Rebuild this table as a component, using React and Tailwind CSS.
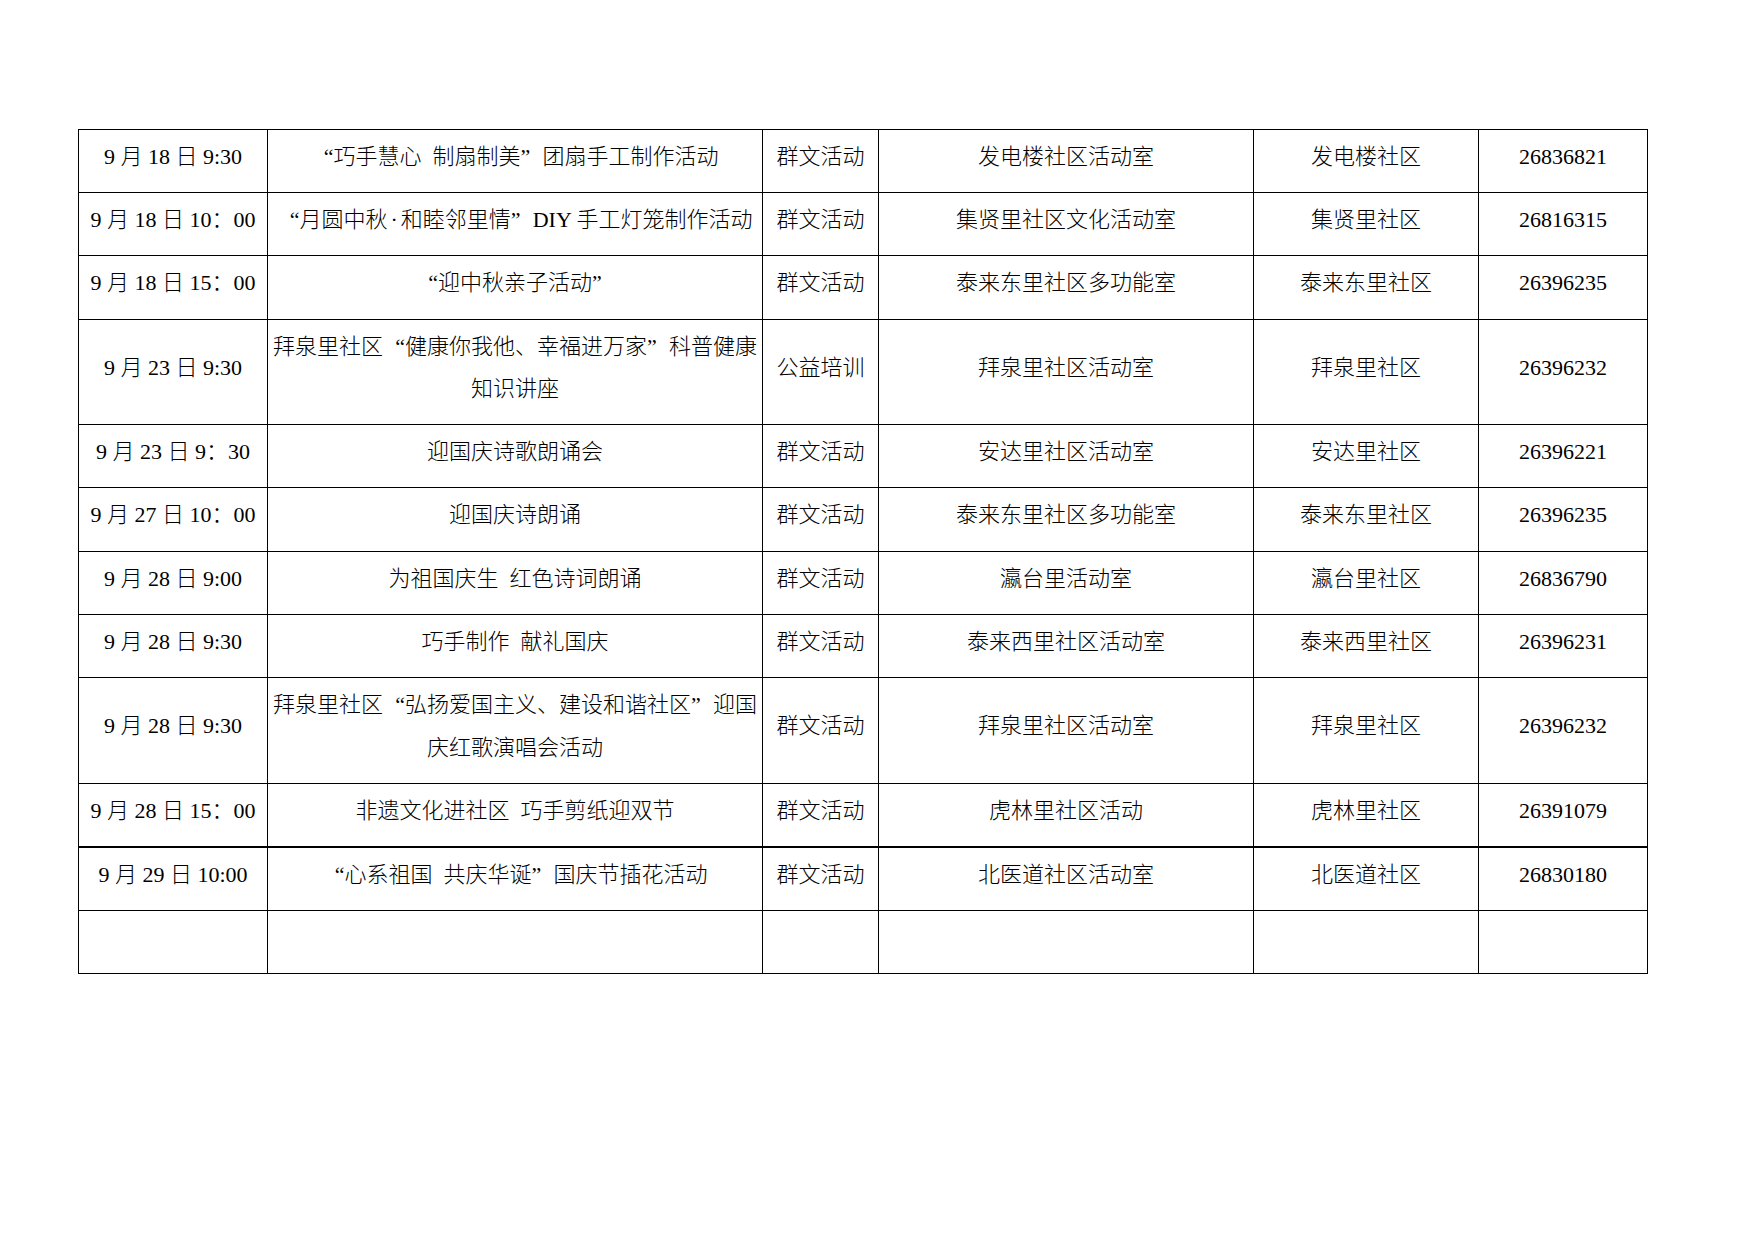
import React from "react";

const L = () => <span className="inline-block w-[1em] text-right">“</span>;
const R = () => <span className="inline-block w-[1em] text-left">”</span>;
const Dot = () => <span className="inline-block w-[0.6em] text-center">·</span>;
const G = () => <span className="inline-block w-[0.5em]"> </span>;

const rows = [
  ["9 月 18 日 9:30", <><L />巧手慧心<G />制扇制美<R />团扇手工制作活动</>, "群文活动", "发电楼社区活动室", "发电楼社区", "26836821"],
  ["9 月 18 日 10：00", <><L />月圆中秋<Dot />和睦邻里情<R />DIY 手工灯笼制作活动</>, "群文活动", "集贤里社区文化活动室", "集贤里社区", "26816315"],
  ["9 月 18 日 15：00", <><L />迎中秋亲子活动<R /></>, "群文活动", "泰来东里社区多功能室", "泰来东里社区", "26396235"],
  ["9 月 23 日 9:30", <>拜泉里社区<L />健康你我他、幸福进万家<R />科普健康<br />知识讲座</>, "公益培训", "拜泉里社区活动室", "拜泉里社区", "26396232"],
  ["9 月 23 日 9：30", "迎国庆诗歌朗诵会", "群文活动", "安达里社区活动室", "安达里社区", "26396221"],
  ["9 月 27 日 10：00", "迎国庆诗朗诵", "群文活动", "泰来东里社区多功能室", "泰来东里社区", "26396235"],
  ["9 月 28 日 9:00", <>为祖国庆生<G />红色诗词朗诵</>, "群文活动", "瀛台里活动室", "瀛台里社区", "26836790"],
  ["9 月 28 日 9:30", <>巧手制作<G />献礼国庆</>, "群文活动", "泰来西里社区活动室", "泰来西里社区", "26396231"],
  ["9 月 28 日 9:30", <>拜泉里社区<L />弘扬爱国主义、建设和谐社区<R />迎国<br />庆红歌演唱会活动</>, "群文活动", "拜泉里社区活动室", "拜泉里社区", "26396232"],
  ["9 月 28 日 15：00", <>非遗文化进社区<G />巧手剪纸迎双节</>, "群文活动", "虎林里社区活动", "虎林里社区", "26391079"],
  ["9 月 29 日 10:00", <><L />心系祖国<G />共庆华诞<R />国庆节插花活动</>, "群文活动", "北医道社区活动室", "北医道社区", "26830180"],
  ["", "", "", "", "", ""],
];

export default function App() {
  return (
    <div
      className="w-[1754px] h-[1241px] bg-white pt-[129px] pl-[78px] text-black"
      style={{ fontFamily: '"Liberation Serif", "Noto Sans CJK SC", serif' }}
    >
      <table className="table-fixed border-collapse w-[1569px] text-[22px] leading-[42.5px] font-light">
        <colgroup>
          <col className="w-[189px]" />
          <col className="w-[495px]" />
          <col className="w-[116px]" />
          <col className="w-[375px]" />
          <col className="w-[225px]" />
          <col className="w-[169px]" />
        </colgroup>
        <tbody>
          {rows.map((r, i) => (
            <tr key={i} className={i === 9 ? "border-b-2 border-black" : ""}>
              {r.map((c, j) => (
                <td
                  key={j}
                  className={
                    "border border-black text-center align-middle whitespace-nowrap pt-[6px] pb-[13.7px] px-0 " +
                    (i === 9 ? "border-b-2" : "")
                  }
                >
                  {c === "" ? "\u00a0" : c}
                </td>
              ))}
            </tr>
          ))}
        </tbody>
      </table>
    </div>
  );
}
